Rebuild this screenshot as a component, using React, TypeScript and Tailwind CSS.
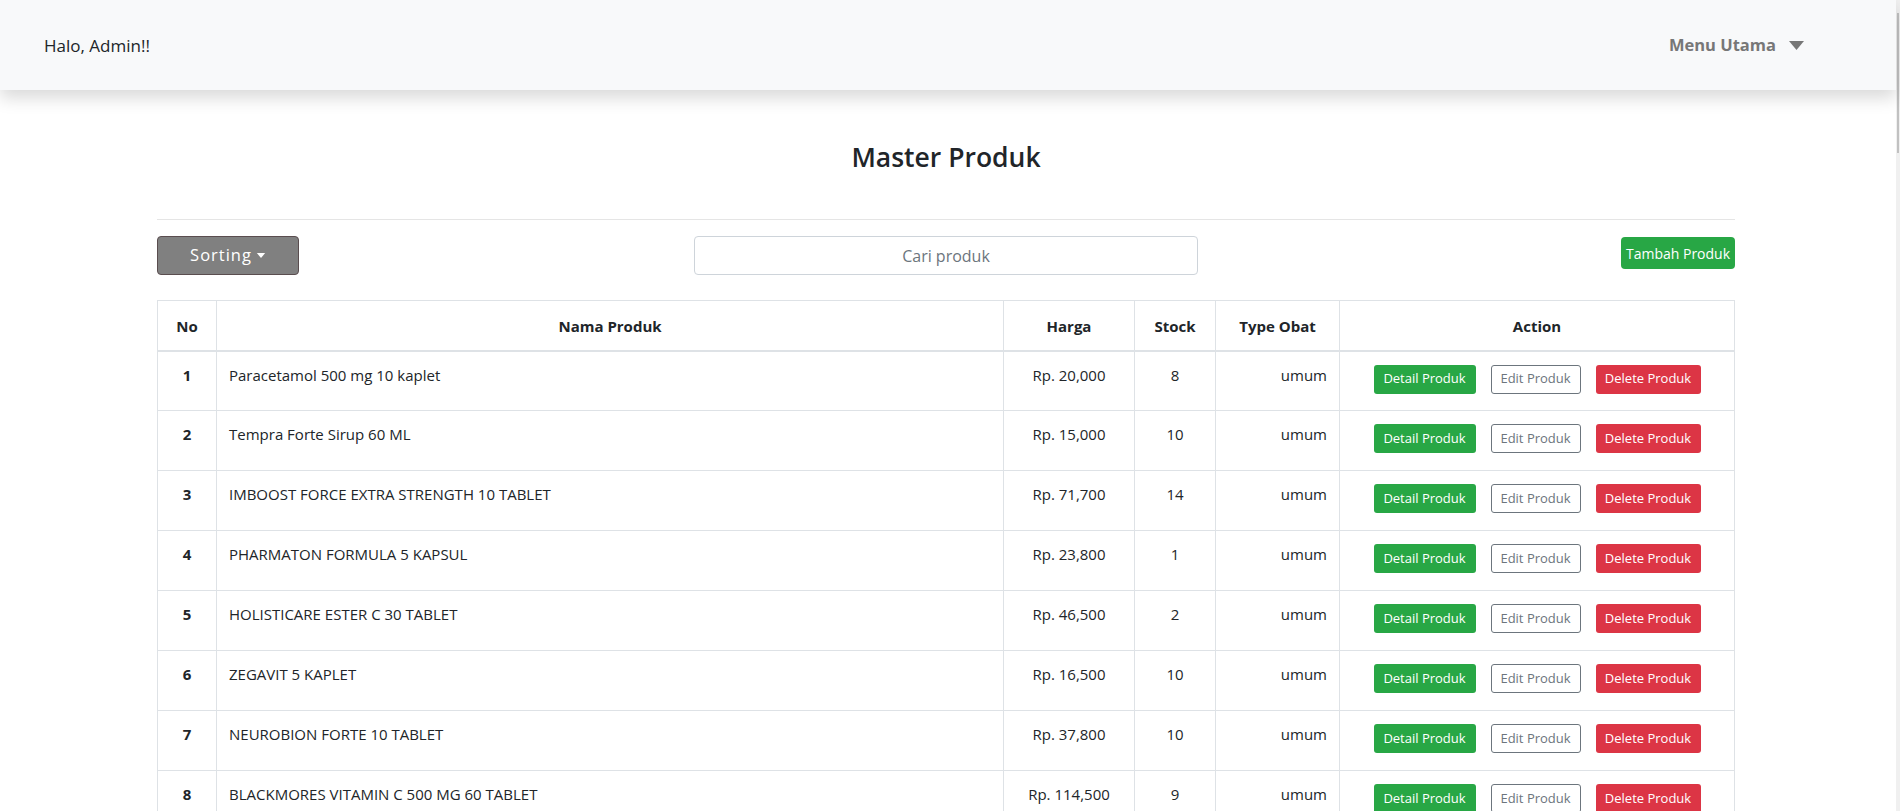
import React from 'react'

const rows = [
  { no: 1, nama: 'Paracetamol 500 mg 10 kaplet', harga: 'Rp. 20,000', stock: 8, type: 'umum' },
  { no: 2, nama: 'Tempra Forte Sirup 60 ML', harga: 'Rp. 15,000', stock: 10, type: 'umum' },
  { no: 3, nama: 'IMBOOST FORCE EXTRA STRENGTH 10 TABLET', harga: 'Rp. 71,700', stock: 14, type: 'umum' },
  { no: 4, nama: 'PHARMATON FORMULA 5 KAPSUL', harga: 'Rp. 23,800', stock: 1, type: 'umum' },
  { no: 5, nama: 'HOLISTICARE ESTER C 30 TABLET', harga: 'Rp. 46,500', stock: 2, type: 'umum' },
  { no: 6, nama: 'ZEGAVIT 5 KAPLET', harga: 'Rp. 16,500', stock: 10, type: 'umum' },
  { no: 7, nama: 'NEUROBION FORTE 10 TABLET', harga: 'Rp. 37,800', stock: 10, type: 'umum' },
  { no: 8, nama: 'BLACKMORES VITAMIN C 500 MG 60 TABLET', harga: 'Rp. 114,500', stock: 9, type: 'umum' },
]

function Caret({ className }: { className?: string }) {
  return (
    <svg viewBox="0 0 10 6" className={className} fill="currentColor">
      <path d="M0 0h10L5 6z" />
    </svg>
  )
}

export default function App() {
  return (
    <div
      className="h-[811px] w-[1900px] overflow-hidden flex bg-white text-[#212529]"
      style={{ fontFamily: '"Open Sans", "Noto Sans", sans-serif' }}
    >
      <div className="flex-1 min-w-0">
        {/* navbar */}
        <nav className="h-[90px] bg-[#f8f9fa] flex items-center justify-between pl-[44px] pr-[91px] shadow-[0_8px_16px_rgba(0,0,0,0.15)] relative z-10">
          <span className="text-[17px] leading-none">Halo, Admin!!</span>
          <button className="flex items-center gap-[12px] text-[16.5px] font-bold text-[#777777]">
            Menu Utama
            <Caret className="w-[17px] h-[9px]" />
          </button>
        </nav>

        <main className="w-[1578px] ml-[157px] pt-[50px]">
          <h3 className="text-center text-[26.5px] font-semibold leading-[34px]">Master Produk</h3>
          <hr className="mt-[45px] border-t border-[#e5e5e5]" />

          <div className="mt-[16px] flex items-center justify-between h-[39px]">
            <button className="w-[142px] h-[39px] rounded-[4px] bg-[#808080] border border-[#5a4d4f] text-white text-[16.5px] tracking-[1px] flex items-center justify-center gap-[4px]">
              Sorting
              <Caret className="w-[10px] h-[5px]" />
            </button>
            <input
              placeholder="Cari produk"
              className="w-[504px] h-[39px] rounded-[4px] border border-[#ced4da] text-center text-[16px] placeholder:text-[#6c757d] mr-[28px]"
            />
            <button className="w-[114px] h-[32px] self-start mt-[1px] rounded-[4px] bg-[#28a745] text-white text-[14px]">
              Tambah Produk
            </button>
          </div>

          <table className="mt-[25px] w-[1578px] table-fixed border-collapse border border-[#dee2e6] text-[15px]">
            <colgroup>
              <col className="w-[59px]" />
              <col className="w-[787px]" />
              <col className="w-[131px]" />
              <col className="w-[81px]" />
              <col className="w-[124px]" />
              <col />
            </colgroup>
            <thead>
              <tr className="h-[50px] border-b-2 border-[#dee2e6]">
                {['No', 'Nama Produk', 'Harga', 'Stock', 'Type Obat', 'Action'].map((h) => (
                  <th key={h} className="border border-[#dee2e6] border-b-2 px-[12px] pt-[1px] font-bold text-center">
                    {h}
                  </th>
                ))}
              </tr>
            </thead>
            <tbody>
              {rows.map((r) => (
                <tr key={r.no} className="h-[60px] align-top">
                  <td className="border border-[#dee2e6] px-[12px] pt-[12px] font-bold text-center">{r.no}</td>
                  <td className="border border-[#dee2e6] px-[12px] pt-[12px]">{r.nama}</td>
                  <td className="border border-[#dee2e6] px-[12px] pt-[12px] text-center">{r.harga}</td>
                  <td className="border border-[#dee2e6] px-[12px] pt-[12px] text-center">{r.stock}</td>
                  <td className="border border-[#dee2e6] px-[12px] pt-[12px] text-right">{r.type}</td>
                  <td className="border border-[#dee2e6] px-[12px] pt-[13px]">
                    <div className="flex justify-center gap-[15px]">
                      <button className="w-[102px] h-[29px] rounded-[3px] bg-[#28a745] text-white text-[13px]">
                        Detail Produk
                      </button>
                      <button className="w-[90px] h-[29px] rounded-[3px] border border-[#6c757d] bg-white text-[#6c757d] text-[13px]">
                        Edit Produk
                      </button>
                      <button className="w-[105px] h-[29px] rounded-[3px] bg-[#dc3545] text-white text-[13px]">
                        Delete Produk
                      </button>
                    </div>
                  </td>
                </tr>
              ))}
            </tbody>
          </table>
        </main>
      </div>

      {/* scrollbar */}
      <div className="w-[4px] bg-[#f0f0f0] pt-[13px]">
        <div className="mx-auto w-[2px] h-[140px] bg-[#c1c1c1]" />
      </div>
    </div>
  )
}
